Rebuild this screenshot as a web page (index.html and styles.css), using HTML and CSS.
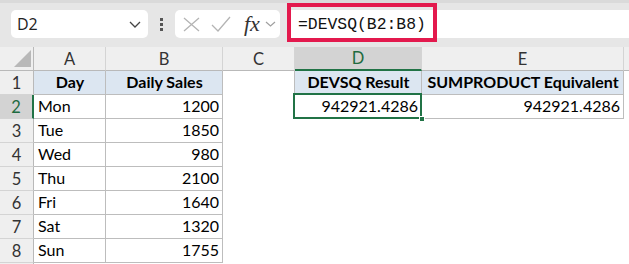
FILE: index.html
```html
<!DOCTYPE html>
<html lang="en">
<head>
    <meta charset="UTF-8">
    <meta name="viewport" content="width=device-width, initial-scale=1.0">
    <title>DEVSQ</title>
    <link rel="stylesheet" href="styles.css">
</head>
<body>

    <!-- s工具栏 -->
    <div class="toolbar">
        <div class="namebox">
            <span>D2</span>
            <svg class="chev" width="12" height="7" viewBox="0 0 12 7"><path d="M1 1l5 5 5-5" fill="none" stroke="#444" stroke-width="1.3"/></svg>
        </div>
        <div class="dots"><i></i><i></i><i></i></div>
        <div class="fxbox">
            <svg width="17" height="15" viewBox="0 0 17 15"><path d="M1 1l15 13M16 1L1 14" stroke="#b4b4b4" stroke-width="1.3"/></svg>
            <svg width="20" height="16" viewBox="0 0 20 16"><path d="M1 9l6 6L19 1" fill="none" stroke="#b4b4b4" stroke-width="1.3"/></svg>
            <span class="fx">fx</span>
            <svg width="11" height="6" viewBox="0 0 11 6"><path d="M1 1l4.5 4 4.5-4" fill="none" stroke="#a0a0a0" stroke-width="1.2"/></svg>
        </div>
        <div class="formula">
            <span class="text">=DEVSQ(B2:B8)</span>
            <span class="mark"></span>
        </div>
    </div>
    <!-- e工具栏 -->

    <div class="sheet">
        <div class="hd corner"><span class="tri"></span></div>
        <div class="hd">A</div>
        <div class="hd">B</div>
        <div class="hd">C</div>
        <div class="hd sel">D</div>
        <div class="hd">E</div>
        <div class="hd rest"></div>

        <div class="rh">1</div>
        <div class="t th">Day</div>
        <div class="t th">Daily Sales</div>
        <div class="c lb"></div>
        <div class="t th">DEVSQ Result</div>
        <div class="t th">SUMPRODUCT Equivalent</div>
        <div class="c"></div>

        <div class="rh sel">2</div>
        <div class="t">Mon</div>
        <div class="t n">1200</div>
        <div class="c lb"></div>
        <div class="t n active">942921.4286<span class="handle"></span></div>
        <div class="t n">942921.4286</div>
        <div class="c"></div>

        <div class="rh">3</div>
        <div class="t">Tue</div>
        <div class="t n">1850</div>
        <div class="c"></div><div class="c"></div><div class="c"></div><div class="c"></div>

        <div class="rh">4</div>
        <div class="t">Wed</div>
        <div class="t n">980</div>
        <div class="c"></div><div class="c"></div><div class="c"></div><div class="c"></div>

        <div class="rh">5</div>
        <div class="t">Thu</div>
        <div class="t n">2100</div>
        <div class="c"></div><div class="c"></div><div class="c"></div><div class="c"></div>

        <div class="rh">6</div>
        <div class="t">Fri</div>
        <div class="t n">1640</div>
        <div class="c"></div><div class="c"></div><div class="c"></div><div class="c"></div>

        <div class="rh">7</div>
        <div class="t">Sat</div>
        <div class="t n">1320</div>
        <div class="c"></div><div class="c"></div><div class="c"></div><div class="c"></div>

        <div class="rh">8</div>
        <div class="t">Sun</div>
        <div class="t n">1755</div>
        <div class="c"></div><div class="c"></div><div class="c"></div><div class="c"></div>

        <div class="rh"></div>
        <div class="c"></div><div class="c"></div><div class="c"></div><div class="c"></div><div class="c"></div><div class="c"></div>
    </div>
</body>
</html>
```

FILE: styles.css
```css
/* 页面基础 */
* { box-sizing: border-box; }
body { margin: 0; width: 629px; height: 264px; overflow: hidden; background: #fff; font-family: "Lato", "Liberation Sans", sans-serif; color: #000; }

/* 工具栏 */
.toolbar { height: 47px; display: flex; align-items: flex-start; padding: 7px 0 0 11px; background: #e6e6e6; border-top: 3px solid #dadada; }
.namebox { width: 137px; height: 28px; display: flex; align-items: center; justify-content: space-between; padding: 0 7px 0 6px; background: #fff; border-radius: 5px; font-family: "Open Sans", sans-serif; font-size: 16px; color: #222; }
.dots { width: 27px; height: 28px; display: flex; flex-direction: column; align-items: center; justify-content: center; gap: 2px; }
.dots i { width: 3px; height: 3px; background: #555; }
.fxbox { width: 105px; height: 28px; display: flex; align-items: center; gap: 11px; padding-left: 8px; background: #fff; border-radius: 5px; }
.fxbox .fx { font-family: "Liberation Serif", serif; font-style: italic; font-size: 22px; color: #333; margin-left: 2px; margin-right: -6px; line-height: 1; }
.formula { position: relative; flex: 1; height: 28px; margin-left: 10px; padding-left: 8px; display: flex; align-items: center; background: #fff; }
.formula .text { font-family: "Liberation Mono", monospace; font-size: 16.4px; color: #111; }
/* 红框标注 */
.formula .mark { position: absolute; left: -3px; top: -7px; width: 150px; height: 39px; border: 4px solid #e3194d; }

/* 表格区 */
.sheet { display: grid; grid-template-columns: 34px 72px 117px 72px 127px 202px 1fr; grid-auto-rows: 24px; height: 217px; overflow: hidden; font-size: 16px; }
.hd { display: flex; align-items: center; justify-content: center; background: #efefef; border-right: 1px solid #d4d4d4; border-bottom: 1px solid #b9b9b9; color: #333; font-size: 16.5px; }
.hd.rest { border-right: 0; }
.hd.sel { background: #d3d3d3; color: #1e6b40; border-bottom: 2px solid #217346; }
.corner { position: relative; border-right: 1px solid #b9b9b9; }
.corner .tri { position: absolute; right: 2px; bottom: 3px; width: 17px; height: 17px; background: #b8b8b8; clip-path: polygon(100% 0, 100% 100%, 0 100%); }
.rh { display: flex; align-items: center; justify-content: center; background: #efefef; border-right: 1px solid #b9b9b9; border-bottom: 1px solid #d4d4d4; color: #333; font-size: 16.5px; }
.rh.sel { background: #d3d3d3; color: #1e6b40; border-right: 2px solid #217346; }

.c { border-right: 1px solid transparent; border-bottom: 1px solid transparent; }
.c.lb { border-right-color: #bdbdbd; }
.t { position: relative; display: flex; align-items: flex-end; padding: 0 3px 3px 4px; border-right: 1px solid #bdbdbd; border-bottom: 1px solid #bdbdbd; white-space: nowrap; }
.t.n { justify-content: flex-end; }
.t.th { justify-content: center; font-weight: bold; background: #dce6f1; }
/* 选中单元格 */
.t.active { border-color: transparent; }
.t.active::after { content: ""; position: absolute; left: -2px; top: -2px; right: -1px; bottom: -1px; border: 2px solid #217346; }
.handle { position: absolute; right: -4px; bottom: -4px; width: 6px; height: 6px; background: #217346; border: 1px solid #fff; z-index: 1; }
```
